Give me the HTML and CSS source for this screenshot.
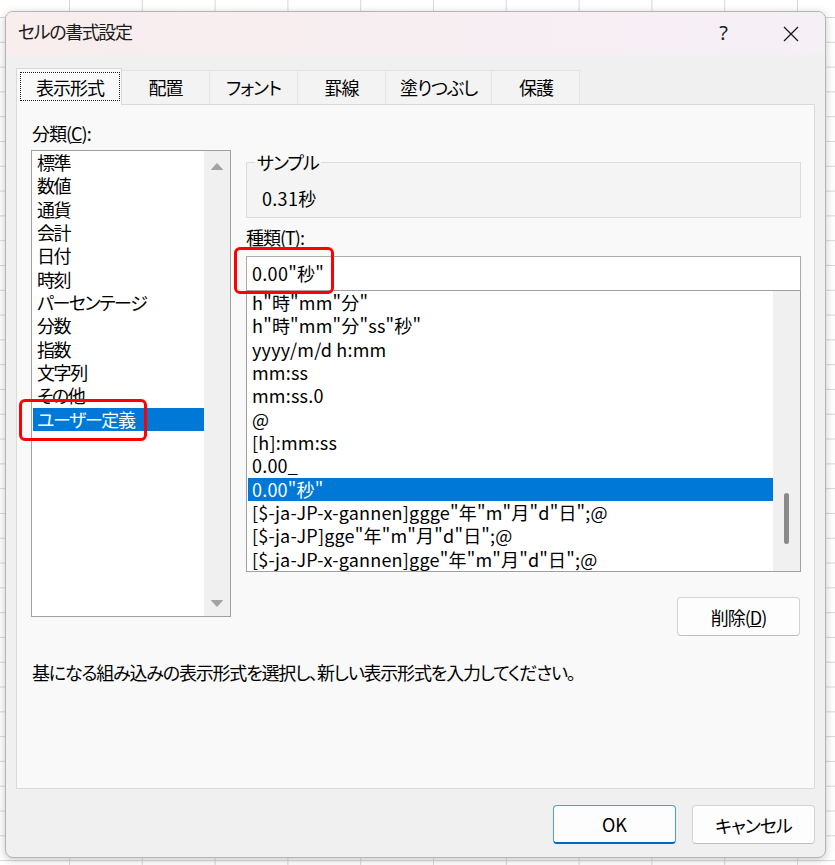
FILE: index.html
```html
<!DOCTYPE html>
<html lang="ja">
<head>
<meta charset="utf-8">
<title>セルの書式設定</title>
<link rel="stylesheet" href="styles.css">
</head>
<body>
<div class="dialog">
  <div class="titlebar">
    <span class="title">セルの書式設定</span>
    <span class="help">?</span>
    <span class="close"><svg width="16" height="16" viewBox="0 0 16 16"><path d="M1 1L15 15M15 1L1 15" stroke="#1a1a1a" stroke-width="1.3" fill="none"/></svg></span>
  </div>
  <div class="content">
    <div class="tabs">
      <div class="tab active"><span class="focus">表示形式</span></div>
      <div class="tab">配置</div>
      <div class="tab">フォント</div>
      <div class="tab">罫線</div>
      <div class="tab">塗りつぶし</div>
      <div class="tab">保護</div>
    </div>
    <div class="panel">
      <div class="label cat-label">分類(<u>C</u>):</div>
      <div class="columns">
        <div class="catlist">
          <ul class="items">
            <li>標準</li>
            <li>数値</li>
            <li>通貨</li>
            <li>会計</li>
            <li>日付</li>
            <li>時刻</li>
            <li>パーセンテージ</li>
            <li>分数</li>
            <li>指数</li>
            <li>文字列</li>
            <li>その他</li>
            <li class="sel">ユーザー定義</li>
          </ul>
          <div class="arrows">
            <svg width="12" height="7" viewBox="0 0 12 7"><path d="M6 0.5L11.5 6.5H0.5Z" fill="#a3a3a3" stroke="#a3a3a3" stroke-linejoin="round"/></svg>
            <svg width="12" height="7" viewBox="0 0 12 7"><path d="M6 6.5L11.5 0.5H0.5Z" fill="#a3a3a3" stroke="#a3a3a3" stroke-linejoin="round"/></svg>
          </div>
        </div>
        <div class="right">
          <fieldset class="sample">
            <legend>サンプル</legend>
            <div class="sample-value">0.31秒</div>
          </fieldset>
          <div class="label type-label">種類(T):</div>
          <div class="input">0.00"秒"</div>
          <div class="fmtlist">
            <ul class="items">
              <li>h"時"mm"分"</li>
              <li>h"時"mm"分"ss"秒"</li>
              <li>yyyy/m/d h:mm</li>
              <li>mm:ss</li>
              <li>mm:ss.0</li>
              <li>@</li>
              <li>[h]:mm:ss</li>
              <li>0.00_</li>
              <li class="sel">0.00"秒"</li>
              <li>[$-ja-JP-x-gannen]ggge"年"m"月"d"日";@</li>
              <li>[$-ja-JP]gge"年"m"月"d"日";@</li>
              <li>[$-ja-JP-x-gannen]gge"年"m"月"d"日";@</li>
            </ul>
            <div class="track"><span class="thumb"></span></div>
          </div>
          <div class="btnrow"><button class="btn del">削除(<u>D</u>)</button></div>
        </div>
      </div>
      <p class="desc">基になる組み込みの表示形式を選択し、新しい表示形式を入力してください。</p>
    </div>
    <div class="footer">
      <button class="btn ok">OK</button>
      <button class="btn">キャンセル</button>
    </div>
  </div>
</div>
<div class="mark mark-input"></div>
<div class="mark mark-cat"></div>
</body>
</html>
```

FILE: styles.css
```css
* { box-sizing: border-box; }

html, body {
  margin: 0;
  padding: 0;
}

body {
  width: 835px;
  height: 865px;
  overflow: hidden;
  position: relative;
  background-color: #ffffff;
  background-image:
    linear-gradient(to right, #d8d8d8 1px, transparent 1px),
    linear-gradient(to bottom, #d8d8d8 1px, transparent 1px);
  background-size: 72.8px 24.8px;
  background-position: 69px 17px;
  font-family: "Noto Sans CJK JP", "Noto Sans", sans-serif;
  font-feature-settings: "palt";
  font-size: 18px;
  letter-spacing: -1px;
  color: #000;
}

.dialog {
  margin: 11px 0 0 5px;
  width: 821px;
  height: 847px;
  border: 1px solid #b4b4b4;
  border-radius: 8px;
  background: #f0f0f0;
  box-shadow: 0 2px 8px rgba(0, 0, 0, 0.22);
  overflow: hidden;
  display: flex;
  flex-direction: column;
}

.titlebar {
  height: 43px;
  flex: none;
  display: flex;
  align-items: center;
  padding: 0 26px 5px 12px;
  background: linear-gradient(to right, #f9eded, #f5eff6);
  color: #1a1a1a;
}

.title {
  flex: 1;
  font-size: 18px;
  line-height: 24px;
  letter-spacing: -1.4px;
}

.help {
  font-family: "Noto Sans", sans-serif;
  font-size: 20px;
  line-height: 22px;
  margin-right: 56px;
  margin-top: 4px;
  color: #1a1a1a;
}

.close {
  display: flex;
  width: 16px;
  height: 16px;
  margin-top: 5px;
}

.content {
  flex: 1;
  display: flex;
  flex-direction: column;
  padding: 13px 10px 13px 10px;
}

.tabs {
  display: flex;
  align-items: flex-end;
  height: 36px;
  position: relative;
  z-index: 1;
}

.tab {
  height: 34px;
  min-width: 88px;
  line-height: 32px;
  padding: 0 14px;
  text-align: center;
  background: #f3f3f3;
  border-top: 1px solid #e4e4e4;
  border-right: 1px solid #e4e4e4;
  white-space: nowrap;
}

.tab.active {
  height: 37px;
  margin-bottom: -1px;
  padding: 3px 1px 4px 3px;
  background: #f9f9f9;
  border: 1px solid #d9d9d9;
  border-bottom: none;
  line-height: normal;
}

.focus {
  display: block;
  height: 100%;
  border: 1px dotted #222;
  padding: 0 15px;
  line-height: 29px;
}

.panel {
  height: 685px;
  flex: none;
  background: #f9f9f9;
  border: 1px solid #dadada;
  padding: 16px 13px 0 14px;
}

.label {
  line-height: 24px;
}

.cat-label {
  margin-left: 1px;
}

.columns {
  display: flex;
  margin-top: 5px;
}

.catlist {
  width: 200px;
  height: 467px;
  flex: none;
  border: 1px solid #a0a0a0;
  background: #fff;
  display: flex;
  letter-spacing: -1.4px;
}

.items {
  list-style: none;
  margin: 0;
  padding: 0 0 0 1px;
  flex: 1;
}

.items li {
  height: 23.33px;
  line-height: 23.33px;
  padding-left: 4px;
  white-space: nowrap;
}

.items li.sel {
  background: #0078d7;
  color: #fff;
}

.arrows {
  width: 26px;
  flex: none;
  background: #f0f0f0;
  display: flex;
  flex-direction: column;
  justify-content: space-between;
  align-items: center;
  padding: 12px 0 9px;
}

.right {
  width: 555px;
  margin-left: 15px;
  display: flex;
  flex-direction: column;
}

.sample {
  margin: 0;
  padding: 12px 15px 7px;
  border: 1px solid #dcdcdc;
  background: #f4f4f4;
  min-inline-size: 0;
}

.sample legend {
  padding: 0 2px;
  margin-left: -7px;
  line-height: 24px;
}

.sample-value {
  line-height: 24px;
  letter-spacing: 0.3px;
}

.type-label {
  margin-top: 7px;
}

.input {
  margin-top: 7px;
  height: 34px;
  border: 1px solid #ababab;
  border-bottom: none;
  background: #fff;
  padding: 1px 0 0 5px;
  line-height: 30px;
  letter-spacing: 0.3px;
}

.fmtlist {
  height: 282px;
  border: 1px solid #a0a0a0;
  background: #fff;
  display: flex;
  letter-spacing: 0.2px;
}

.track {
  width: 27px;
  flex: none;
  background: #f0f0f0;
  display: flex;
  flex-direction: column;
  align-items: center;
}

.thumb {
  display: block;
  width: 5px;
  height: 51px;
  margin-top: 202px;
  border-radius: 3px;
  background: #8a8a8a;
}

.btnrow {
  display: flex;
  justify-content: flex-end;
  margin-top: 25px;
  padding-right: 1px;
}

.btn {
  font: inherit;
  letter-spacing: inherit;
  color: #000;
  width: 123px;
  height: 39px;
  padding: 0;
  background: #fdfdfd;
  border: 1px solid #d3d3d3;
  border-bottom-color: #bfbfbf;
  border-radius: 4px;
  line-height: 36px;
}

.desc {
  margin: 24px 0 0 1px;
  line-height: 24px;
  letter-spacing: -1.2px;
}

.footer {
  display: flex;
  justify-content: flex-end;
  gap: 16px;
  margin-top: 16px;
}

.btn.ok {
  border-color: #4f9be3;
  border-bottom: 2px solid #0067c0;
  letter-spacing: 0;
}

.mark {
  position: absolute;
  border: 3px solid #ff0000;
  border-radius: 6px;
}

.mark-input {
  left: 234px;
  top: 247px;
  width: 100px;
  height: 47px;
}

.mark-cat {
  left: 19px;
  top: 399px;
  width: 128px;
  height: 42px;
}
```
